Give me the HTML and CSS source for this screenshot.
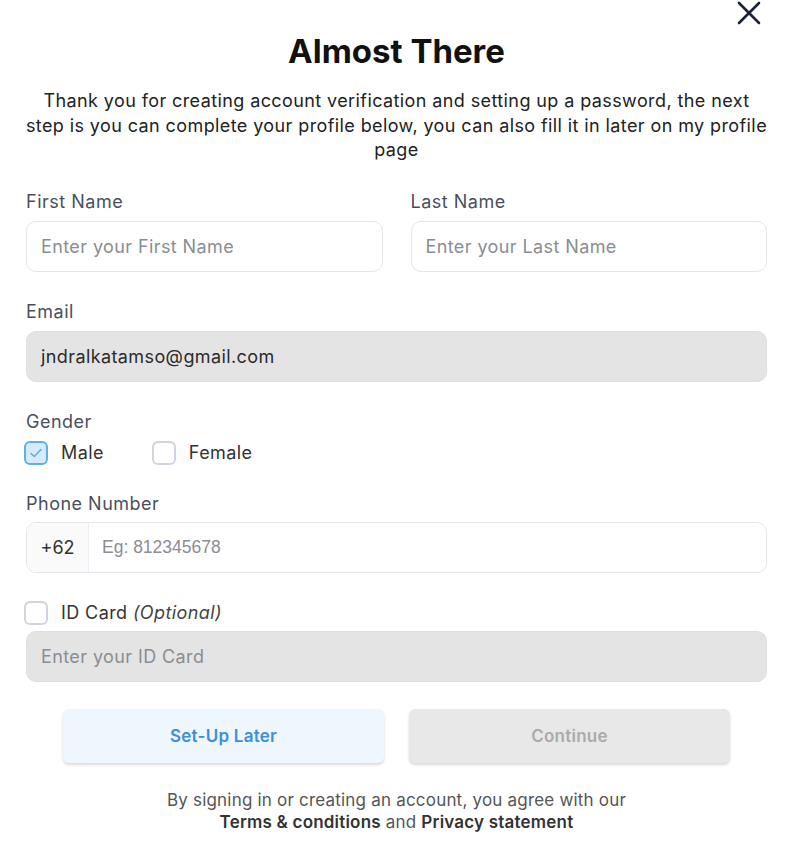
FILE: index.html
```html
<!DOCTYPE html>
<html lang="en">
<head>
<meta charset="utf-8">
<title>Almost There</title>
<link rel="stylesheet" href="styles.css">
</head>
<body>
<div class="modal">
  <button class="close" aria-label="Close">
    <svg width="24" height="24" viewBox="0 0 24 24"><path d="M2 2L22 22M22 2L2 22" stroke="#1c2235" stroke-width="2.6" stroke-linecap="round"/></svg>
  </button>
  <h1 class="title">Almost There</h1>
  <p class="intro">Thank you for creating account verification and setting up a password, the next<br>step is you can complete your profile below, you can also fill it in later on my profile<br>page</p>

  <div class="row-two">
    <div class="field">
      <label class="label">First Name</label>
      <div class="input"><span class="ph">Enter your First Name</span></div>
    </div>
    <div class="field">
      <label class="label">Last Name</label>
      <div class="input"><span class="ph">Enter your Last Name</span></div>
    </div>
  </div>

  <div class="field email">
    <label class="label">Email</label>
    <div class="input disabled"><span class="val">jndralkatamso@gmail.com</span></div>
  </div>

  <div class="field gender">
    <label class="label">Gender</label>
    <div class="options">
      <div class="opt">
        <span class="box checked"><svg width="16" height="16" viewBox="0 0 16 16"><path d="M3 8.5L6.3 11.5L13 4.5" fill="none" stroke="#5aa6e0" stroke-width="1.4" stroke-linecap="round" stroke-linejoin="round"/></svg></span>
        <span class="opt-text">Male</span>
      </div>
      <div class="opt">
        <span class="box"></span>
        <span class="opt-text">Female</span>
      </div>
    </div>
  </div>

  <div class="field phone-field">
    <label class="label">Phone Number</label>
    <div class="input phone">
      <span class="prefix">+62</span>
      <span class="phone-ph">Eg: 812345678</span>
    </div>
  </div>

  <div class="field idcard">
    <div class="opt">
      <span class="box"></span>
      <span class="opt-text">ID Card <em>(Optional)</em></span>
    </div>
    <div class="input disabled"><span class="ph">Enter your ID Card</span></div>
  </div>

  <div class="actions">
    <button class="btn later">Set-Up Later</button>
    <button class="btn cont">Continue</button>
  </div>

  <p class="terms">By signing in or creating an account, you agree with our<br><b>Terms &amp; conditions</b> and <b>Privacy statement</b></p>
</div>
</body>
</html>
```

FILE: styles.css
```css
* { box-sizing: border-box; }
html, body { margin: 0; padding: 0; background: #fff; }
body { font-family: Inter, "Noto Sans", sans-serif; color: #222; }

.modal {
  position: relative;
  width: 791px;
  padding: 31px 24px 0 26px;
}
.close {
  position: absolute;
  top: 1px;
  right: 30px;
  border: 0;
  background: none;
  padding: 0;
  width: 24px;
  height: 24px;
  cursor: pointer;
}
.title {
  margin: 0;
  text-align: center;
  font-size: 33px;
  font-weight: 700;
  line-height: 40px;
  color: #111;
}
.intro {
  margin: 18px -10px 0;
  text-align: center;
  font-size: 18px;
  line-height: 24.5px;
  color: #222;
  letter-spacing: 0.4px;
  white-space: nowrap;
}
.row-two {
  display: grid;
  grid-template-columns: 1fr 1fr;
  column-gap: 28px;
  margin-top: 28px;
}
.field { display: flex; flex-direction: column; }
.email { margin-top: 29px; }
.gender { margin-top: 29px; }
.phone-field { margin-top: 28px; }
.idcard { margin-top: 28px; }
.label {
  font-size: 18px;
  line-height: 22px;
  color: #4b4f5c;
  margin-bottom: 8px;
  letter-spacing: 0.5px;
}
.phone-field .label { margin-bottom: 7px; }
.input {
  height: 51px;
  border: 1px solid #e3e6ea;
  border-radius: 10px;
  display: flex;
  align-items: center;
  padding: 0 14px;
  font-size: 18px;
  letter-spacing: 0.4px;
  background: #fff;
}
.input.disabled { background: #e4e4e4; border-color: #dedede; }
.ph { color: #8a8d93; }
.val { color: #2b2b2b; }

.gender .label { margin-bottom: 8px; }
.options { display: flex; gap: 50px; }
.opt { display: flex; align-items: center; gap: 13px; margin-left: -2px; }
.box {
  width: 24px;
  height: 24px;
  border: 2px solid #d0d5dd;
  border-radius: 6px;
  display: flex;
  align-items: center;
  justify-content: center;
  background: #fff;
  flex: none;
}
.box.checked { border: 2.5px solid #5eafea; background: #d6eafa; }
.opt-text { font-size: 18px; color: #333; letter-spacing: 0.4px; }
.opt-text em { font-style: italic; color: #444; }

.input.phone { padding: 0; overflow: hidden; }
.prefix {
  width: 62px;
  height: 100%;
  display: flex;
  align-items: center;
  justify-content: center;
  background: #fafafa;
  border-right: 1px solid #eceef1;
  color: #333;
  letter-spacing: 0;
}
.phone-ph {
  padding-left: 13px;
  font-family: "Liberation Sans", Arial, sans-serif;
  font-size: 17.5px;
  letter-spacing: 0;
  color: #8a8d93;
}

.idcard .opt { margin-bottom: 6px; }

.actions {
  display: flex;
  justify-content: center;
  gap: 25px;
  margin-top: 27px;
}
.btn {
  width: 321px;
  height: 54px;
  border: 0;
  border-radius: 6px;
  font-family: Inter, sans-serif;
  font-size: 17px;
  font-weight: 600;
  letter-spacing: 0.25px;
  box-shadow: 0 2px 3px rgba(0,0,0,0.15);
}
.btn.later { background: #eef6fe; color: #3d8fd9; }
.btn.cont { background: #e8e8e8; color: #ababab; }

.terms {
  margin: 26px 0 0;
  text-align: center;
  font-size: 17px;
  line-height: 22px;
  color: #555;
  letter-spacing: 0.2px;
}
.terms b { color: #333; font-weight: 600; }
```
